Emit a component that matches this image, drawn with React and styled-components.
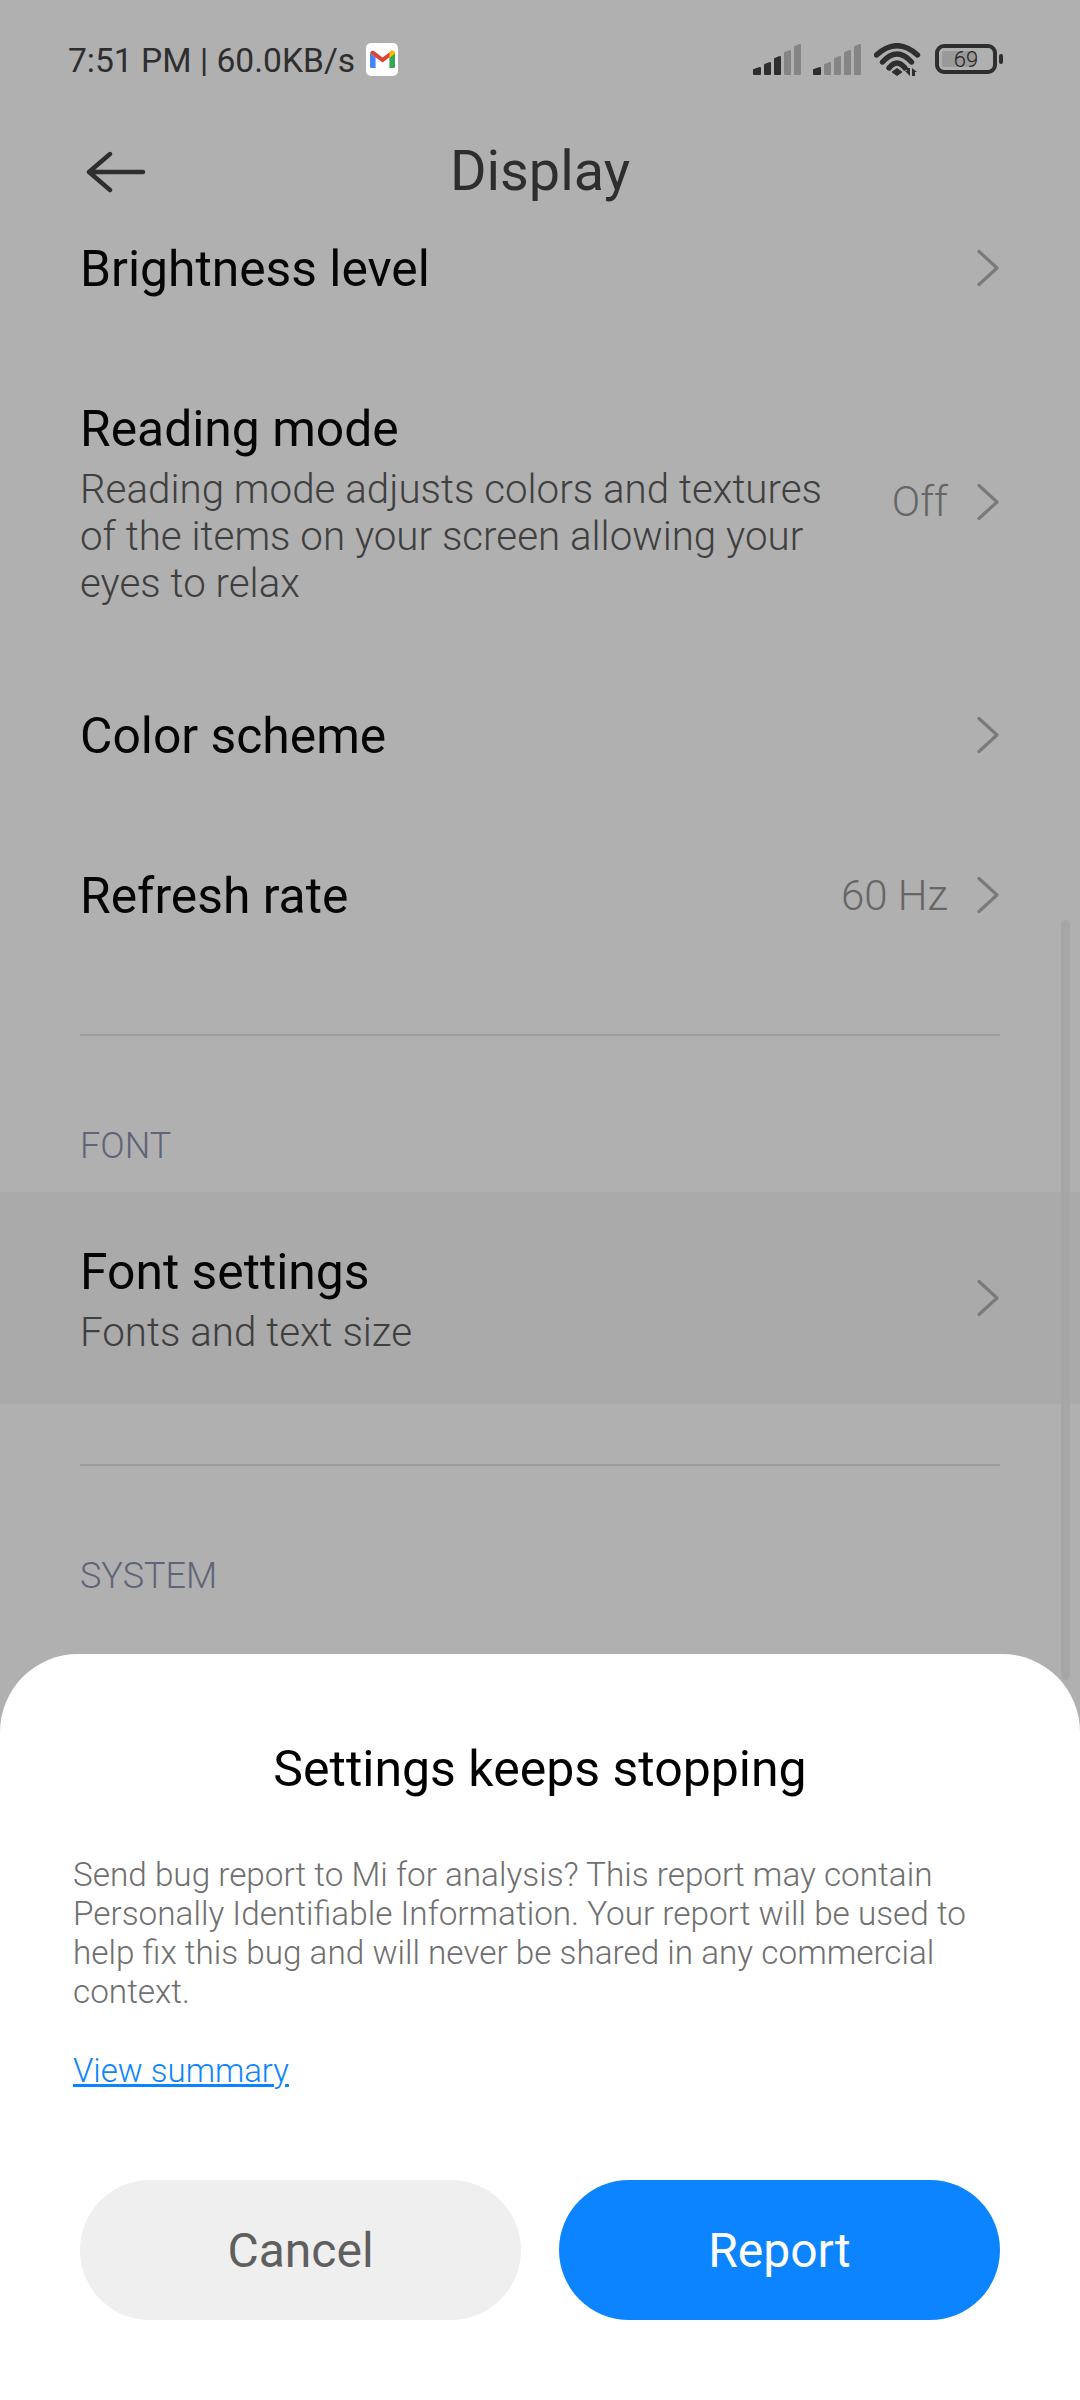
import React from "react";
import styled, { createGlobalStyle } from "styled-components";

const Global = createGlobalStyle`
  html, body { margin: 0; padding: 0; background: #b0b0b0; }
  * { box-sizing: border-box; }
`;

const Screen = styled.div`
  position: relative;
  width: 1080px;
  height: 2400px;
  overflow: hidden;
  background: #b0b0b0;
  font-family: Roboto, "Liberation Sans", sans-serif;
`;

const StatusBar = styled.div`
  height: 118px;
  padding: 38px 77px 0 68px;
  display: flex;
  align-items: flex-start;
  justify-content: space-between;
`;
const StatusLeft = styled.div`
  display: flex;
  align-items: center;
  gap: 11px;
  height: 42px;
`;
const StatusText = styled.span`
  font-size: 33.6px;
  color: #2e2e2e;
  white-space: nowrap;
  position: relative;
  top: 1px;
`;
const StatusRight = styled.div`
  display: flex;
  align-items: flex-start;
  gap: 13px;
  padding-top: 5px;
  svg { display: block; }
`;
const SignalGroup = styled.div`
  display: flex;
  gap: 12px;
`;
const Gmail = styled.div`
  width: 32px;
  height: 33px;
  border-radius: 5px;
  background: #fff;
  display: flex;
  align-items: center;
  justify-content: center;
`;

const Header = styled.div`
  position: relative;
  height: 105px;
  display: flex;
  align-items: center;
  justify-content: center;
`;
const BackIcon = styled.svg`
  position: absolute;
  left: 86px;
  top: 33px;
`;
const Title = styled.h1`
  margin: 0;
  font-size: 55.8px;
  font-weight: 400;
  color: #2e2e2e;
`;

const List = styled.div`
  margin-top: -35px;
`;
const Row = styled.div`
  height: ${(p) => p.$h}px;
  padding: 0 80px;
  display: flex;
  align-items: center;
  justify-content: space-between;
  background: ${(p) => (p.$active ? "#aaaaaa" : "transparent")};
`;
const RowText = styled.div`
  width: 760px;
  padding-top: 2px;
`;
const RowTitle = styled.div`
  font-size: 49.8px;
  line-height: 60px;
  color: #050505;
  white-space: nowrap;
`;
const RowDescBlock = styled.div`
  margin-top: 7px;
`;
const RowDesc = styled.div`
  font-size: 40.3px;
  line-height: 47px;
  font-weight: 300;
  color: #3f3f3f;
  white-space: nowrap;
`;
const RowEnd = styled.div`
  display: flex;
  align-items: center;
  gap: 28px;
`;
const RowValue = styled.span`
  font-size: 42px;
  font-weight: 300;
  color: #666;
`;

const Divider = styled.div`
  height: 2px;
  margin: ${(p) => p.$m};
  background: #9c9c9c;
`;
const SectionLabel = styled.div`
  padding: 0 80px;
  height: 40px;
  line-height: 40px;
  font-size: 36px;
  font-weight: 300;
  color: #5f6478;
  margin: ${(p) => p.$m};
`;

const ScrollThumb = styled.div`
  position: absolute;
  left: 1061px;
  top: 920px;
  width: 9px;
  height: 760px;
  border-radius: 5px;
  background: #a6a6a6;
`;

const Sheet = styled.section`
  position: absolute;
  left: 0;
  right: 0;
  top: 1654px;
  bottom: 0;
  background: #fff;
  border-radius: 78px 78px 0 0;
  padding: 82px 0 0;
`;
const SheetTitle = styled.h2`
  margin: 0;
  text-align: center;
  font-size: 50px;
  line-height: 66px;
  font-weight: 400;
  color: #000;
`;
const SheetBody = styled.p`
  margin: 53px 0 0;
  padding: 0 73px;
  font-size: 33.3px;
  line-height: 39px;
  font-weight: 300;
  color: #6f6f6f;
  white-space: nowrap;
`;
const SummaryLink = styled.a`
  display: block;
  margin: 40px 0 0 73px;
  font-size: 33px;
  line-height: 39px;
  font-weight: 300;
  color: #0d84ff;
  text-decoration: underline;
`;
const Buttons = styled.div`
  display: flex;
  gap: 38px;
  padding: 0 80px 0 80px;
  margin-top: 90px;
`;
const Button = styled.div`
  flex: 1;
  height: 140px;
  border-radius: 70px;
  background: ${(p) => (p.$primary ? "#0d84ff" : "#efefef")};
  color: ${(p) => (p.$primary ? "#fff" : "#5f5f5f")};
  display: flex;
  align-items: center;
  justify-content: center;
  font-size: 48px;
`;

const Chevron = () => (
  <svg width="24" height="38" viewBox="0 0 24 38" fill="none">
    <path d="M3 2.5 L21 19 L3 35.5" stroke="#7a7a7a" strokeWidth="3.2" strokeLinecap="round" strokeLinejoin="round" />
  </svg>
);

const BARS = [
  { x: 0, w: 8, top: 24 },
  { x: 11, w: 7, top: 19 },
  { x: 21, w: 7, top: 13 },
  { x: 31, w: 7, top: 7 },
  { x: 41, w: 7, top: 1 },
];

const Signal = ({ on }) => (
  <svg width="48" height="33" viewBox="0 0 48 33">
    {BARS.map((b, i) => {
      const c = i < on ? "#2e2e2e" : "#858585";
      const l = b.x + 1;
      const r = b.x + b.w - 1;
      return (
        <path
          key={i}
          d={`M${l} 31 V${b.top + 3} L${r} ${b.top + 1} V31 Z`}
          fill={c}
          stroke={c}
          strokeWidth="2"
          strokeLinejoin="round"
        />
      );
    })}
  </svg>
);

const App = () => (
  <Screen>
    <Global />
    <StatusBar>
      <StatusLeft>
        <StatusText>7:51 PM | 60.0KB/s</StatusText>
        <Gmail>
          <svg width="25" height="19" viewBox="0 0 25 19">
            <path d="M0 3 V16.5 Q0 18 1.5 18 H5.6 V7 Z" fill="#4285f4" />
            <path d="M19.4 7 V18 H23.5 Q25 18 25 16.5 V3 Z" fill="#34a853" />
            <path d="M0 3 L12.5 12.5 L25 3 L22 0.5 L12.5 7.5 L4 1 Q1 0 0 3 Z" fill="#e04335" />
            <path d="M19.4 3 V8 L25 3.6 V2.5 Q24 -0.6 21 1 Z" fill="#fbbc04" />
          </svg>
        </Gmail>
      </StatusLeft>
      <StatusRight>
        <SignalGroup>
          <Signal on={3} />
          <Signal on={1} />
        </SignalGroup>
        <svg width="48" height="33" viewBox="0 0 48 33" fill="none">
          <path d="M2.5 12 Q23 -6.5 43.5 12" stroke="#2e2e2e" strokeWidth="5.4" strokeLinecap="round" />
          <path d="M8.5 19 Q23 3 37.5 19" stroke="#2e2e2e" strokeWidth="5.4" strokeLinecap="round" />
          <path d="M15 25 Q23 15 31 25" stroke="#2e2e2e" strokeWidth="5.4" strokeLinecap="round" />
          <path d="M18 29 L23 25.5 L28 29 L23 32.5 Z" fill="#2e2e2e" stroke="#2e2e2e" strokeWidth="1" strokeLinejoin="round" />
          <path d="M31 28 H33 V25 H36 V33 Z M38 33 V25 L43 29 H41 V33 Z" fill="#2e2e2e" />
        </svg>
        <svg width="68" height="33" viewBox="0 0 68 33" fill="none">
          <rect x="2" y="3" width="58" height="26" rx="7" stroke="#2e2e2e" strokeWidth="4" />
          <rect x="7" y="8" width="33" height="16" rx="2" fill="#999" />
          <rect x="64" y="11" width="4" height="10" rx="2" fill="#2e2e2e" />
          <text x="31" y="24" textAnchor="middle" fontFamily="Roboto" fontWeight="300" fontSize="22" fill="#222">69</text>
        </svg>
      </StatusRight>
    </StatusBar>

    <Header>
      <BackIcon width="62" height="44" viewBox="0 0 62 44" fill="none">
        <path d="M24 3 L3 21 L24 39 M3 21 H57" stroke="#2e2e2e" strokeWidth="4.4" strokeLinecap="round" strokeLinejoin="round" />
      </BackIcon>
      <Title>Display</Title>
    </Header>

    <List>
      <Row $h={160}>
        <RowText><RowTitle>Brightness level</RowTitle></RowText>
        <RowEnd><Chevron /></RowEnd>
      </Row>
      <Row $h={307}>
        <RowText>
          <RowTitle>Reading mode</RowTitle>
          <RowDescBlock>
            <RowDesc>Reading mode adjusts colors and textures</RowDesc>
            <RowDesc>of the items on your screen allowing your</RowDesc>
            <RowDesc>eyes to relax</RowDesc>
          </RowDescBlock>
        </RowText>
        <RowEnd><RowValue>Off</RowValue><Chevron /></RowEnd>
      </Row>
      <Row $h={160}>
        <RowText><RowTitle>Color scheme</RowTitle></RowText>
        <RowEnd><Chevron /></RowEnd>
      </Row>
      <Row $h={160}>
        <RowText><RowTitle>Refresh rate</RowTitle></RowText>
        <RowEnd><RowValue>60 Hz</RowValue><Chevron /></RowEnd>
      </Row>

      <Divider $m="59px 80px 0" />
      <SectionLabel $m="90px 0 26px">FONT</SectionLabel>
      <Row $h={212} $active>
        <RowText>
          <RowTitle>Font settings</RowTitle>
          <RowDescBlock>
            <RowDesc>Fonts and text size</RowDesc>
          </RowDescBlock>
        </RowText>
        <RowEnd><Chevron /></RowEnd>
      </Row>
      <Divider $m="60px 80px 0" />
      <SectionLabel $m="90px 0 0">SYSTEM</SectionLabel>
    </List>

    <ScrollThumb />

    <Sheet>
      <SheetTitle>Settings keeps stopping</SheetTitle>
      <SheetBody>
        Send bug report to Mi for analysis? This report may contain<br />
        Personally Identifiable Information. Your report will be used to<br />
        help fix this bug and will never be shared in any commercial<br />
        context.
      </SheetBody>
      <SummaryLink>View summary</SummaryLink>
      <Buttons>
        <Button>Cancel</Button>
        <Button $primary>Report</Button>
      </Buttons>
    </Sheet>
  </Screen>
);

export default App;
